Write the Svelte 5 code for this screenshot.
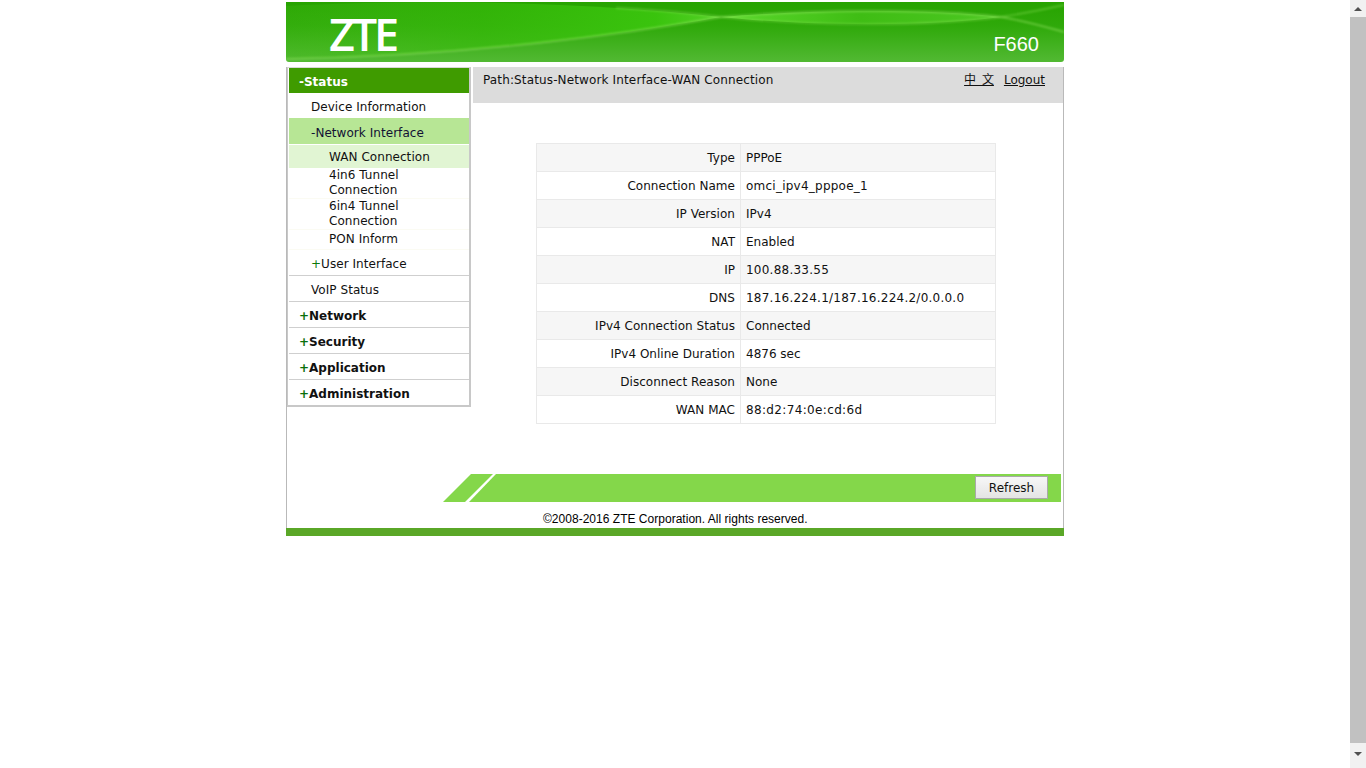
<script>
  const rows = [
    ['Type', 'PPPoE', ''],
    ['Connection Name', 'omci_ipv4_pppoe_1', 'wide'],
    ['IP Version', 'IPv4', ''],
    ['NAT', 'Enabled', ''],
    ['IP', '100.88.33.55', 'wide'],
    ['DNS', '187.16.224.1/187.16.224.2/0.0.0.0', 'wide'],
    ['IPv4 Connection Status', 'Connected', ''],
    ['IPv4 Online Duration', '4876 sec', ''],
    ['Disconnect Reason', 'None', ''],
    ['WAN MAC', '88:d2:74:0e:cd:6d', 'wider']
  ];
  const sections = ['Network', 'Security', 'Application', 'Administration'];
</script>

<div class="page">
  <div class="viewport">
    <div class="wrap">
      <header class="banner">
        <svg class="swoosh" viewBox="0 0 778 60" preserveAspectRatio="none" aria-hidden="true">
          <defs>
            <linearGradient id="base" x1="0" y1="0" x2="0" y2="1">
              <stop offset="0" stop-color="#27a300" />
              <stop offset="0.4" stop-color="#2fa90a" />
              <stop offset="1" stop-color="#52b933" />
            </linearGradient>
            <linearGradient id="glow" x1="0" y1="0" x2="1" y2="0">
              <stop offset="0" stop-color="#46bf18" stop-opacity="0.2" />
              <stop offset="0.45" stop-color="#38bd0b" stop-opacity="0.6" />
              <stop offset="0.85" stop-color="#3bc70e" stop-opacity="0.9" />
              <stop offset="1" stop-color="#58d52a" stop-opacity="0.9" />
            </linearGradient>
            <linearGradient id="lens" x1="0" y1="0" x2="1" y2="0">
              <stop offset="0" stop-color="#5ad82c" />
              <stop offset="0.5" stop-color="#3fbd14" />
              <stop offset="1" stop-color="#4cc722" />
            </linearGradient>
            <filter id="soft" x="-5%" y="-50%" width="110%" height="200%">
              <feGaussianBlur stdDeviation="0.9" />
            </filter>
          </defs>
          <rect width="778" height="60" fill="url(#base)" />
          <path d="M0 4C120 -2 280 -2 435 15C340 32 180 54 0 57Z" fill="url(#glow)" />
          <path d="M435 15C520 8 640 6 715 15C640 25 520 24 435 15Z" fill="url(#lens)" />
          <g fill="none" filter="url(#soft)">
            <path d="M0 57C180 54 340 32 435 15C520 8 640 6 715 15C740 19 760 25 778 30" stroke="#9ce86a" stroke-opacity="0.6" stroke-width="1.4" />
            <path d="M330 6C370 8 405 11 435 15C520 24 640 25 715 15C740 11 760 7 778 3" stroke="#8fe45c" stroke-opacity="0.5" stroke-width="1.4" />
          </g>
        </svg>
        <span class="logo">ZTE</span>
        <span class="model">F660</span>
      </header>

      <div class="body">
        <nav class="side">
          <div class="item top active">-Status</div>
          <div class="item l2 device">Device Information</div>
          <div class="item l2 current">-Network Interface</div>
          <div class="sub selected">WAN Connection</div>
          <div class="sub two">4in6 Tunnel Connection</div>
          <div class="sub two">6in4 Tunnel Connection</div>
          <div class="sub pon">PON Inform</div>
          <div class="item l2 ui"><span class="plus">+</span>User Interface</div>
          <div class="item l2 ruled">VoIP Status</div>
          {#each sections as s}
            <div class="item top ruled"><span class="plus">+</span>{s}</div>
          {/each}
        </nav>

        <main class="content">
          <div class="path">
            <span class="trail">Path:Status-Network Interface-WAN Connection</span>
            <span class="links"><u class="zh">中 文</u><u>Logout</u></span>
          </div>
          <div class="tablewrap">
            <table>
              <tbody>
                {#each rows as r}
                  <tr><th>{r[0]}</th><td class={r[2]}>{r[1]}</td></tr>
                {/each}
              </tbody>
            </table>
          </div>
        </main>
      </div>

      <div class="actions">
        <svg class="slant" width="53" height="28" viewBox="0 0 53 28" aria-hidden="true">
          <polygon points="0,28 28,0 50,0 22,28" fill="#84d74a" />
          <polygon points="26,28 53,0 53,28" fill="#84d74a" />
        </svg>
        <div class="bar"><button type="button">Refresh</button></div>
      </div>
      <div class="copy">©2008-2016 ZTE Corporation. All rights reserved.</div>
      <div class="foot"></div>
    </div>
  </div>

  <aside class="scroll" aria-hidden="true">
    <span class="arrow up"></span>
    <span class="thumb"></span>
    <span class="arrow down"></span>
  </aside>
</div>

<style>
  :global(body) { margin: 0; background: #fff; overflow: hidden; }
  .page { display: flex; height: 768px; font: 12px/15px "DejaVu Sans", Verdana, sans-serif; color: #111; }
  .viewport { flex: 1; min-width: 0; }
  .wrap { width: 778px; margin: 2px auto 0; }

  .banner { position: relative; height: 60px; }
  .swoosh { position: absolute; inset: 0; width: 100%; height: 100%; border-radius: 0 0 3px 3px; }
  .logo { position: absolute; left: 43px; top: 4px; font: 600 45px/56px "Open Sans", sans-serif; letter-spacing: -3.2px; color: #fff; }
  .model { position: absolute; right: 25px; bottom: 6px; font: 20px/24px "Liberation Sans", sans-serif; color: #fff; }

  .body { display: flex; margin-top: 5px; height: 407px; border-left: 1px solid #b9b9b9; border-right: 1px solid #b9b9b9; }
  .side { box-sizing: border-box; flex: none; width: 184px; height: 340px; padding-left: 1px; border-left: 1px solid #c8c8c8; border-right: 2px solid #c8c8c8; border-bottom: 2px solid #c8c8c8; border-top: 1px solid #d8d8d8; align-self: flex-start; letter-spacing: 0.05px; }
  .item { box-sizing: border-box; display: flex; align-items: flex-start; height: 26px; padding-top: 7px; }
  .top { padding-left: 10px; font-weight: 700; letter-spacing: 0; }
  .active { height: 25px; background: #3f9b00; color: #fff; }
  .l2 { padding-left: 22px; }
  .device { height: 25px; }
  .current { padding-top: 8px; background: #b7e695; color: #113; }
  .ruled { border-top: 1px solid #cfcfcf; }
  .ui { height: 25px; padding-top: 7px; }
  .plus { color: #0b7a0b; }
  .top .plus { color: #0a6f0a; }
  .sub { box-sizing: border-box; padding: 0 20px 0 40px; border-bottom: 1px solid #fbfbf3; }
  .selected { height: 23px; margin-top: 1px; padding-top: 5px; background: #e1f5d3; border-bottom: 0; }
  .two { height: 31px; }
  .pon { height: 20px; padding-top: 2px; }

  .content { flex: 1; min-width: 0; margin-left: 2px; }
  .path { box-sizing: border-box; display: flex; justify-content: space-between; height: 36px; padding: 6px 18px 0 10px; background: #dcdcdc; }
  .trail { letter-spacing: 0.136px; }
  .links { display: flex; gap: 10px; }
  .zh { font-family: "DejaVu Sans", "Noto Sans CJK SC", sans-serif; word-spacing: 2px; }
  .tablewrap { padding: 40px 0 0 63px; }
  table { width: 460px; border-collapse: collapse; table-layout: fixed; }
  tr:nth-child(odd) { background: #f6f6f6; }
  th, td { box-sizing: border-box; height: 28px; padding: 1px 5px 0; border: 1px solid #e9e9e9; font-weight: 400; }
  th { width: 204px; text-align: right; letter-spacing: 0.03px; }
  td { text-align: left; }
  .wide { letter-spacing: 0.24px; }
  .wider { letter-spacing: 0.35px; }

  .actions { display: flex; height: 28px; padding: 0 2px 0 156px; border-right: 1px solid #b9b9b9; border-left: 1px solid #b9b9b9; }
  .slant { flex: none; display: block; }
  .bar { flex: 1; display: flex; justify-content: flex-end; align-items: flex-start; padding: 2px 13px 0 0; background: #84d74a; }
  button { box-sizing: border-box; width: 73px; height: 23px; padding: 0; border: 1px solid #a9a9a9; background: linear-gradient(#f7f7f7, #e4e4e4); font: 12px "DejaVu Sans", Verdana, sans-serif; color: #111; }

  .copy { box-sizing: border-box; height: 26px; padding: 10px 0 0 256px; border-left: 1px solid #b9b9b9; border-right: 1px solid #b9b9b9; font: 12px/15px "Liberation Sans", Arial, sans-serif; letter-spacing: 0.02px; color: #000; }
  .foot { height: 8px; background: #5aa727; }

  .scroll { flex: none; width: 16px; display: flex; flex-direction: column; align-items: center; background: #f1f1f1; }
  .thumb { flex: 1; width: 100%; background: #c1c1c1; }
  .arrow { flex: none; position: relative; width: 100%; height: 17px; }
  .arrow::after { content: ""; position: absolute; left: 4px; border-left: 4px solid transparent; border-right: 4px solid transparent; }
  .up::after { top: 7px; border-bottom: 4px solid #505050; }
  .down { height: 25px; }
  .down::after { top: 9px; border-top: 4px solid #505050; }
</style>
